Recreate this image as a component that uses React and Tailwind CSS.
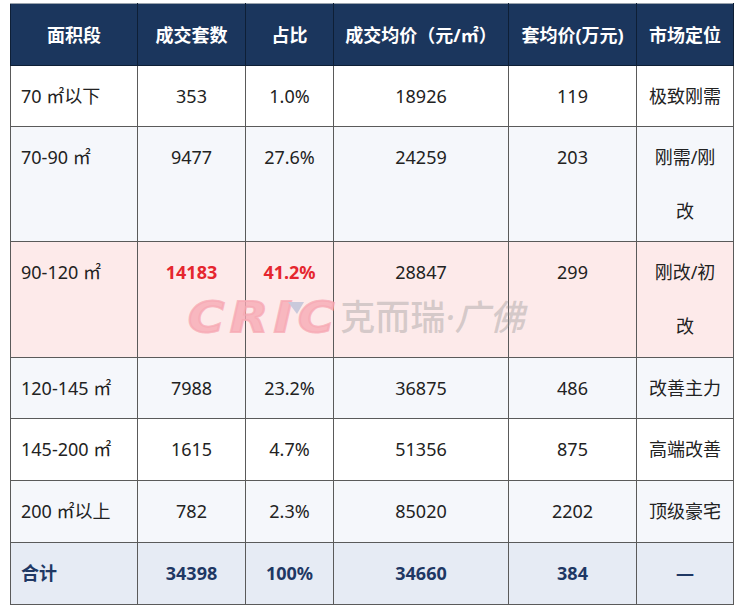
import React from 'react';

const rows = [
  { area: '70 ㎡以下', count: '353', ratio: '1.0%', unit: '18926', total: '119', pos: ['极致刚需'], bg: 'bg-white', pb: 'pb-[3px]' },
  { area: '70-90 ㎡', count: '9477', ratio: '27.6%', unit: '24259', total: '203', pos: ['刚需/刚', '改'], bg: 'bg-[#f5f7fb]', pb: 'pb-[3px]' },
  { area: '90-120 ㎡', count: '14183', ratio: '41.2%', unit: '28847', total: '299', pos: ['刚改/初', '改'], bg: 'bg-[#fdeaea]', pb: 'pb-[4px]', hot: true },
  { area: '120-145 ㎡', count: '7988', ratio: '23.2%', unit: '36875', total: '486', pos: ['改善主力'], bg: 'bg-[#f5f7fb]', pb: 'pb-[3px]' },
  { area: '145-200 ㎡', count: '1615', ratio: '4.7%', unit: '51356', total: '875', pos: ['高端改善'], bg: 'bg-white', pb: 'pb-[4px]' },
  { area: '200 ㎡以上', count: '782', ratio: '2.3%', unit: '85020', total: '2202', pos: ['顶级豪宅'], bg: 'bg-[#f5f7fb]', pb: 'pb-[4px]' },
];

const headers = ['面积段', '成交套数', '占比', '成交均价（元/㎡）', '套均价(万元)', '市场定位'];

const cell = 'border border-[#5a5a5a] pt-[3px] leading-[54px] align-top';

export default function App() {
  return (
    <div
      className="relative w-[740px] h-[607px] bg-white pt-[3px] pl-[10px] text-[18px] text-[#222]"
      style={{ fontFamily: '"Noto Sans", "Noto Sans CJK SC", sans-serif' }}
    >
      <table className="table-fixed border-collapse w-[723px]">
        <colgroup>
          <col className="w-[127px]" />
          <col className="w-[108px]" />
          <col className="w-[88px]" />
          <col className="w-[175px]" />
          <col className="w-[128px]" />
          <col className="w-[97px]" />
        </colgroup>
        <thead>
          <tr className="bg-[#1b365d] text-white">
            {headers.map((h) => (
              <th
                key={h}
                className="border border-[#0e1f36] border-t-[#9aa3ad] h-[62px] font-bold text-center whitespace-nowrap leading-[28px] px-0"
              >
                {h}
              </th>
            ))}
          </tr>
        </thead>
        <tbody>
          {rows.map((r) => (
            <tr key={r.area} className={r.bg}>
              <td className={`${cell} ${r.pb} pl-[10px] text-left whitespace-nowrap`}>{r.area}</td>
              <td className={`${cell} ${r.pb} text-center ${r.hot ? 'text-[#e5262f] font-bold' : ''}`}>{r.count}</td>
              <td className={`${cell} ${r.pb} text-center ${r.hot ? 'text-[#e5262f] font-bold' : ''}`}>{r.ratio}</td>
              <td className={`${cell} ${r.pb} text-center`}>{r.unit}</td>
              <td className={`${cell} ${r.pb} text-center`}>{r.total}</td>
              <td className={`${cell} ${r.pb} text-center whitespace-nowrap`}>
                {r.pos.map((p) => (
                  <div key={p}>{p}</div>
                ))}
              </td>
            </tr>
          ))}
          <tr className="bg-[#e6ebf4] text-[#1f3864] font-bold">
            <td className={`${cell} pb-[4px] pl-[10px] text-left`}>合计</td>
            <td className={`${cell} pb-[4px] text-center`}>34398</td>
            <td className={`${cell} pb-[4px] text-center`}>100%</td>
            <td className={`${cell} pb-[4px] text-center`}>34660</td>
            <td className={`${cell} pb-[4px] text-center`}>384</td>
            <td className={`${cell} pb-[4px] text-center`}>—</td>
          </tr>
        </tbody>
      </table>

      {/* watermark */}
      <div className="absolute left-[188px] top-[294px] flex items-center pointer-events-none select-none">
        <div className="relative">
          <span
            className="block text-[43px] leading-[46px] font-bold italic tracking-[5px] text-[#f7a9b4]/80 scale-x-115 origin-left [-webkit-text-stroke:2px_rgba(247,169,180,0.8)]"
            style={{ fontFamily: '"DejaVu Sans", sans-serif' }}
          >
            CRIC
          </span>
          <svg className="absolute left-[100px] top-[8px]" width="16" height="12" viewBox="0 0 16 12">
            <polygon points="0,0 16,0 9,12" fill="#c9c9db" />
          </svg>
        </div>
        <span className="ml-[20px] text-[35px] leading-[46px] font-medium text-[#8a8a8a]/35 whitespace-nowrap">
          克而瑞<span className="italic">·广佛</span>
        </span>
      </div>
    </div>
  );
}
